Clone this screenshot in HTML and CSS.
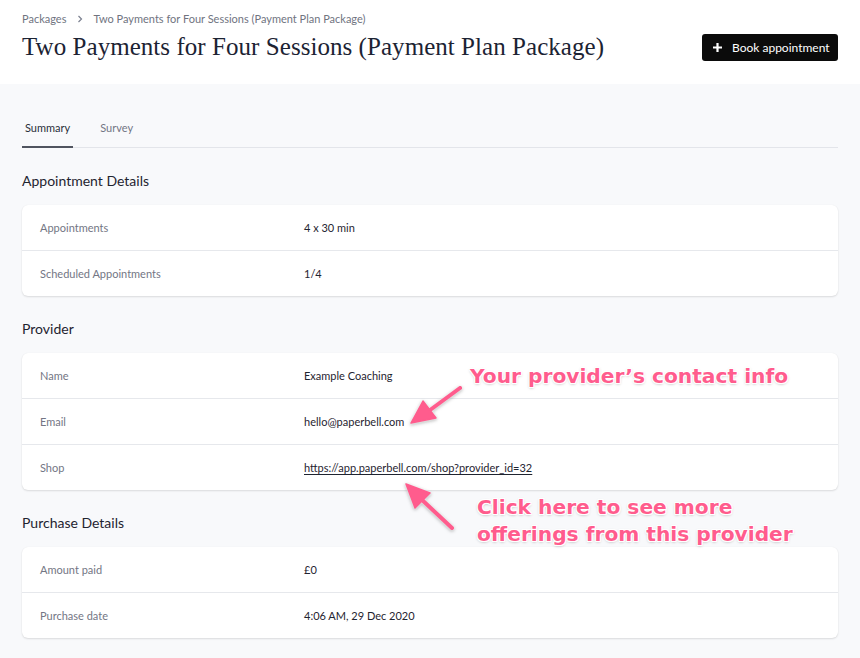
FILE: index.html
```html
<!DOCTYPE html>
<html>
<head>
<meta charset="utf-8">
<link rel="stylesheet" href="styles.css">
</head>
<body>
<header class="header">
  <nav class="crumbs">
    <span>Packages</span>
    <svg class="chev" width="8" height="8" viewBox="0 0 8 8"><path d="M2.5 1 L5.5 4 L2.5 7" fill="none" stroke="#7b8090" stroke-width="1.2"/></svg>
    <span>Two Payments for Four Sessions (Payment Plan Package)</span>
  </nav>
  <div class="title-row">
    <h1 class="title">Two Payments for Four Sessions (Payment Plan Package)</h1>
    <button class="btn">
      <svg width="11" height="11" viewBox="0 0 11 11"><path d="M5.5 1 V10 M1 5.5 H10" stroke="#fff" stroke-width="2.2" stroke-linecap="butt"/></svg>
      <span>Book appointment</span>
    </button>
  </div>
</header>
<main class="main">
  <div class="tabs">
    <div class="tab active">Summary</div>
    <div class="tab">Survey</div>
  </div>

  <h2 class="section first">Appointment Details</h2>
  <div class="card">
    <div class="row"><div class="label">Appointments</div><div class="value">4 x 30 min</div></div>
    <div class="row"><div class="label">Scheduled Appointments</div><div class="value">1/4</div></div>
  </div>

  <h2 class="section">Provider</h2>
  <div class="card">
    <div class="row"><div class="label">Name</div><div class="value">Example Coaching</div></div>
    <div class="row"><div class="label">Email</div><div class="value">hello@paperbell.com</div></div>
    <div class="row"><div class="label">Shop</div><div class="value"><a class="link" href="#">https://app.paperbell.com/shop?provider_id=32</a></div></div>
  </div>

  <h2 class="section">Purchase Details</h2>
  <div class="card">
    <div class="row"><div class="label">Amount paid</div><div class="value">£0</div></div>
    <div class="row"><div class="label">Purchase date</div><div class="value">4:06 AM, 29 Dec 2020</div></div>
  </div>
</main>

<div class="note note1">Your provider’s contact info</div>
<div class="note note2">Click here to see more<br>offerings from this provider</div>
<svg class="arrows" width="860" height="658" viewBox="0 0 860 658">
  <g fill="#ff5c8d" stroke="#ff5c8d" stroke-linejoin="round">
    <line x1="460" y1="388" x2="426" y2="413" stroke-width="4" stroke-linecap="round"/>
    <polygon points="411,423 436,418 423,401" stroke-width="1.5"/>
    <line x1="452" y1="528" x2="420" y2="498" stroke-width="4" stroke-linecap="round"/>
    <polygon points="406,484 430,493 415,508" stroke-width="1.5"/>
  </g>
</svg>
</body>
</html>
```
FILE: styles.css
```css
* { box-sizing: border-box; }
html, body { margin: 0; padding: 0; }
body {
  width: 860px;
  height: 658px;
  overflow: hidden;
  background: #f8f9fb;
  font-family: Lato, "Open Sans", sans-serif;
  color: #1f2430;
  position: relative;
}
.header {
  background: #fff;
  height: 84px;
  padding: 12px 22px 0 22px;
}
.crumbs {
  display: flex;
  align-items: center;
  font-size: 11px;
  line-height: 14px;
  color: #70747f;
}
.crumbs .chev { margin: 0 9px 0 10px; }
.title-row {
  display: flex;
  align-items: center;
  justify-content: space-between;
  margin-top: 4px;
}
.title {
  margin: 0;
  font-family: "Liberation Serif", "DejaVu Serif", serif;
  font-weight: 400;
  font-size: 25px;
  line-height: 34px;
  color: #1c2333;
  letter-spacing: 0.05px;
}
.btn {
  display: flex;
  align-items: center;
  gap: 9px;
  height: 27px;
  width: 136px;
  padding: 0 0 0 10px;
  background: #0b0b0b;
  color: #fff;
  border: 0;
  border-radius: 3px;
  font-family: Lato, sans-serif;
  font-size: 12px;
  margin-top: 1px;
}
.main { padding: 0 22px; }
.tabs {
  display: flex;
  gap: 24px;
  margin-top: 37px;
  border-bottom: 1px solid #e3e5ea;
}
.tab {
  font-size: 11px;
  line-height: 14px;
  padding: 0 3px 11px 3px;
  color: #727684;
  margin-bottom: -1px;
  border-bottom: 2px solid transparent;
}
.tab.active {
  color: #2a2f3a;
  border-bottom-color: #50545f;
}
.section {
  margin: 22px 0 14px 0;
  font-size: 14px;
  line-height: 20px;
  font-weight: 400;
  color: #1f2430;
}
.section.first { margin-top: 23px; }
.card + .section { margin-top: 23px; }
.card {
  background: #fff;
  border-radius: 6px;
  box-shadow: 0 1px 2px rgba(0,0,0,0.12), 0 0 1px rgba(0,0,0,0.06);
}
.row {
  display: flex;
  align-items: center;
  height: 45px;
  padding-left: 18px;
  font-size: 11px;
}
.row + .row { border-top: 1px solid #e6e8ec; height: 46px; }
.label { width: 264px; color: #737684; }
.value { color: #1f2430; }
.link { color: #1f2430; text-decoration: underline; text-underline-offset: 2px; }

.note {
  position: absolute;
  font-family: "DejaVu Sans", "Liberation Sans", sans-serif;
  font-weight: 700;
  font-size: 20.2px;
  line-height: 27px;
  color: #ff5c8d;
  text-shadow:
    1px 0 0 #fff, -1px 0 0 #fff, 0 1px 0 #fff, 0 -1px 0 #fff,
    1px 1px 0 #fff, -1px -1px 0 #fff, 1px -1px 0 #fff, -1px 1px 0 #fff,
    0 1px 3px rgba(0,0,0,0.35);
  white-space: nowrap;
}
.note1 { left: 470px; top: 363px; }
.note2 { left: 477px; top: 494px; }
.arrows {
  position: absolute;
  left: 0;
  top: 0;
  pointer-events: none;
  filter: drop-shadow(0 0 1px #fff) drop-shadow(0 1px 1.5px rgba(0,0,0,0.3));
}
```
